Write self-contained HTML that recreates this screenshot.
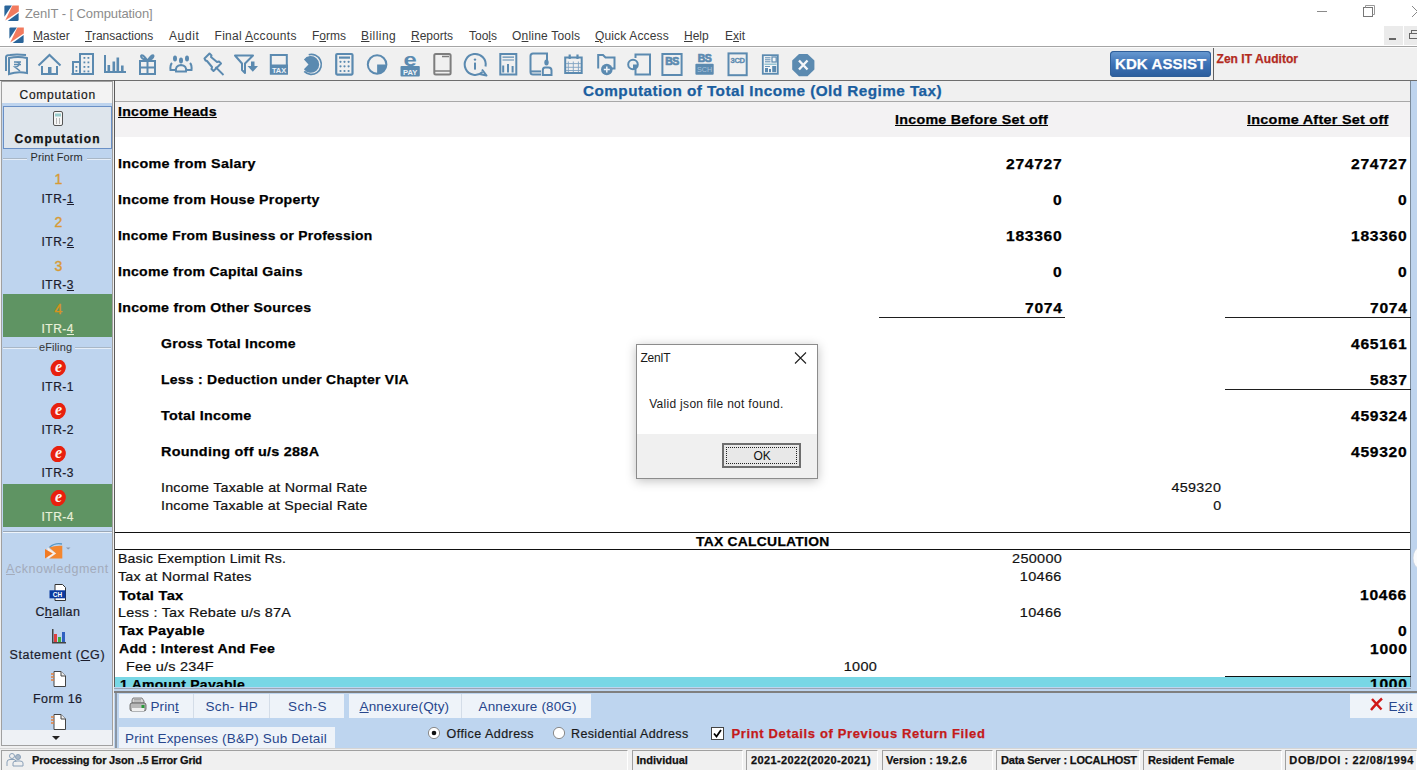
<!DOCTYPE html>
<html><head><meta charset="utf-8"><title>ZenIT</title>
<style>
html,body{margin:0;padding:0}
body{width:1417px;height:770px;overflow:hidden;position:relative;background:#fff;font-family:'Liberation Sans',sans-serif;color:#000}
.t{position:absolute;white-space:nowrap;line-height:20px}
.r{position:absolute}
u{text-decoration:underline;text-decoration-thickness:1px;text-underline-offset:1px}
.b{-webkit-text-stroke:0.25px currentColor}
.v{-webkit-text-stroke:0.2px currentColor}
</style></head><body>
<svg class="r" style="left:4px;top:5px" width="16" height="16" viewBox="0 0 16 16"><path d="M0.4 1.6 Q0.4 0.4 1.6 0.4 L7.9 0.4 L0.4 11.8 Z" fill="#2a659a"/><path d="M8.4 0.4 L14.8 0.4 L14.8 6.4 L1.2 15.6 Z" fill="#f27a5e"/><path d="M14.6 7.9 L14.6 14.7 Q14.6 15.9 13.4 15.9 L3.6 15.9 Z" fill="#2a659a"/></svg>
<div class="t" style="top:4px;font-size:13px;letter-spacing:-0.1px;color:#8c8c8c;left:25px;">ZenIT - [ Computation]</div>
<div class="r" style="left:1317px;top:11px;width:10px;height:1px;background:#8a8a8a;"></div>
<svg class="r" style="left:1363px;top:5px" width="13" height="13" viewBox="0 0 13 13"><rect x="0.5" y="2.5" width="9" height="9" fill="none" stroke="#777"/><path d="M2.5 2.5 V0.5 H11.5 V9.5 H9.5" fill="none" stroke="#999"/></svg>
<svg class="r" style="left:1408px;top:5px" width="9" height="13" viewBox="0 0 9 13"><path d="M4 1 L15 12 M15 1 L4 12" stroke="#888" stroke-width="1"/></svg>
<svg class="r" style="left:9px;top:27px" width="16" height="17" viewBox="0 0 16 17"><path d="M0.4 1.6 Q0.4 0.4 1.6 0.4 L7.9 0.4 L0.4 11.8 Z" fill="#2a659a"/><path d="M8.4 0.4 L14.8 0.4 L14.8 6.4 L1.2 15.6 Z" fill="#f27a5e"/><path d="M14.6 7.9 L14.6 14.7 Q14.6 15.9 13.4 15.9 L3.6 15.9 Z" fill="#2a659a"/></svg>
<div class="t" style="top:26px;font-size:12px;color:#3a3a3a;left:33px;"><u>M</u>aster</div>
<div class="t" style="top:26px;font-size:12px;color:#3a3a3a;left:85px;"><u>T</u>ransactions</div>
<div class="t" style="top:26px;font-size:12px;letter-spacing:0.6px;color:#3a3a3a;left:169px;">A<u>u</u>dit</div>
<div class="t" style="top:26px;font-size:12px;letter-spacing:0.3px;color:#3a3a3a;left:214.5px;">Final <u>A</u>ccounts</div>
<div class="t" style="top:26px;font-size:12px;color:#3a3a3a;left:312px;">F<u>o</u>rms</div>
<div class="t" style="top:26px;font-size:12px;letter-spacing:0.45px;color:#3a3a3a;left:361px;"><u>B</u>illing</div>
<div class="t" style="top:26px;font-size:12px;color:#3a3a3a;left:411px;"><u>R</u>eports</div>
<div class="t" style="top:26px;font-size:12px;color:#3a3a3a;left:469px;">Too<u>l</u>s</div>
<div class="t" style="top:26px;font-size:12px;letter-spacing:0.2px;color:#3a3a3a;left:512px;">O<u>n</u>line Tools</div>
<div class="t" style="top:26px;font-size:12px;letter-spacing:0.15px;color:#3a3a3a;left:595px;"><u>Q</u>uick Access</div>
<div class="t" style="top:26px;font-size:12px;color:#3a3a3a;left:684px;"><u>H</u>elp</div>
<div class="t" style="top:26px;font-size:12px;color:#3a3a3a;left:725px;">E<u>x</u>it</div>
<div class="r" style="left:1384px;top:26px;width:19px;height:19px;background:#ebebeb;"></div>
<div class="r" style="left:1389px;top:38px;width:7px;height:2px;background:#666;"></div>
<div class="r" style="left:1404px;top:26px;width:13px;height:19px;background:#ebebeb;"></div>
<svg class="r" style="left:1409px;top:30px" width="10" height="10" viewBox="0 0 10 10"><rect x="2.5" y="0.5" width="8" height="4" fill="none" stroke="#666"/><rect x="0.5" y="3.5" width="8" height="5" fill="#ebebeb" stroke="#666"/></svg>
<div class="r" style="left:0px;top:46px;width:1417px;height:1px;background:#a5a5a5;"></div>
<div class="r" style="left:0px;top:47px;width:1417px;height:33px;background:#f0f0f0;"></div>
<div class="r" style="left:0px;top:47px;width:1417px;height:1px;background:#fbfbfb;"></div>
<div class="r" style="left:0px;top:80px;width:1417px;height:1px;background:#6e6e6e;"></div>
<svg class="r" style="left:4px;top:53px" width="26" height="23" viewBox="0 0 26 23"><path d="M2 18 V4 Q2 2 6 2 Q12 1 22 2" stroke="#5b8ab0" stroke-width="2" fill="none"/><path d="M5 5 Q14 3 23 5 V20 Q14 18 5 21 Z" stroke="#5b8ab0" stroke-width="2" fill="none"/><path d="M10 9 H17 M10 11.5 H17 M12 9 Q16 9 15 12 Q14 14 11 14 L16 18" stroke="#5b8ab0" stroke-width="1.6" fill="none"/></svg>
<svg class="r" style="left:37px;top:53px" width="25" height="23" viewBox="0 0 25 23"><path d="M1.5 12.5 L12.5 2 L23.5 12.5" stroke="#5b8ab0" stroke-width="2" fill="none"/><path d="M5 13 V21 H20 V13" stroke="#5b8ab0" stroke-width="2" fill="none"/><rect x="11" y="14" width="3.5" height="7" fill="#5b8ab0"/></svg>
<svg class="r" style="left:71px;top:52px" width="23" height="24" viewBox="0 0 23 24"><path d="M2 22 V10 H8" stroke="#5b8ab0" stroke-width="2" fill="none"/><rect x="9" y="2" width="13" height="20" stroke="#5b8ab0" stroke-width="2" fill="none"/><rect x="0.5" y="21" width="22" height="2" fill="#5b8ab0"/><rect x="12.5" y="5" width="1.8" height="1.8" fill="#5b8ab0"/><rect x="12.5" y="9.5" width="1.8" height="1.8" fill="#5b8ab0"/><rect x="12.5" y="14" width="1.8" height="1.8" fill="#5b8ab0"/><rect x="12.5" y="18.5" width="1.8" height="1.8" fill="#5b8ab0"/><rect x="16.5" y="5" width="1.8" height="1.8" fill="#5b8ab0"/><rect x="16.5" y="9.5" width="1.8" height="1.8" fill="#5b8ab0"/><rect x="16.5" y="14" width="1.8" height="1.8" fill="#5b8ab0"/><rect x="16.5" y="18.5" width="1.8" height="1.8" fill="#5b8ab0"/><rect x="4.5" y="14" width="1.8" height="1.8" fill="#5b8ab0"/><rect x="4.5" y="18" width="1.8" height="1.8" fill="#5b8ab0"/></svg>
<svg class="r" style="left:103px;top:54px" width="24" height="21" viewBox="0 0 24 21"><path d="M2 1 V18 H23" stroke="#5b8ab0" stroke-width="2" fill="none"/><rect x="4.5" y="11" width="2.6" height="7" fill="#5b8ab0"/><rect x="9.5" y="7.5" width="2.6" height="10.5" fill="#5b8ab0"/><rect x="13.5" y="3.5" width="2.6" height="14.5" fill="#5b8ab0"/><rect x="18" y="11.5" width="2.6" height="6.5" fill="#5b8ab0"/></svg>
<svg class="r" style="left:138px;top:53px" width="20" height="23" viewBox="0 0 20 23"><rect x="2" y="8" width="15" height="13" stroke="#5b8ab0" stroke-width="2" fill="none"/><path d="M2 14.5 H17 M9.5 8 V21" stroke="#5b8ab0" stroke-width="2" fill="none"/><path d="M9.5 7.5 Q4 0 3 3 Q3 6 9.5 7.5 Q15 6 15.5 3 Q15 0 9.5 7.5" stroke="#5b8ab0" stroke-width="2" fill="none"/></svg>
<svg class="r" style="left:168px;top:53px" width="26" height="21" viewBox="0 0 26 21"><ellipse cx="7" cy="5.5" rx="2" ry="3" fill="#5b8ab0"/><ellipse cx="13" cy="7.5" rx="2" ry="3" fill="#5b8ab0"/><ellipse cx="19" cy="5.5" rx="2" ry="3" fill="#5b8ab0"/><path d="M4 10 Q2 12 2.5 17 H8 M22 10 Q24 12 23.5 17 H18 M8 18.5 Q7 12.5 13 12 Q19 12.5 18 18.5 Z" stroke="#5b8ab0" stroke-width="2" fill="none"/></svg>
<svg class="r" style="left:200px;top:51px" width="26" height="26" viewBox="200 51 26 26"><path d="M204.5 58.5 L209.5 53.5 L211.5 55.5 L211 57 L217 62 L219 61.5 L221 63.5 L213.5 71 L211.5 69 L212 67 L207 61 L205.5 60.5 Z" stroke="#5b8ab0" stroke-width="2" fill="none" stroke-linejoin="round"/><path d="M215.5 67 L223.5 75" stroke="#5b8ab0" stroke-width="1.8"/></svg>
<svg class="r" style="left:232px;top:52px" width="28" height="24" viewBox="232 52 28 24"><path d="M235 55.5 H253 L245 63.5 V73 L242 70 V63.5 Z" stroke="#5b8ab0" stroke-width="2" fill="none" stroke-linejoin="round"/><path d="M251 61.5 H254.5 V66 H258 L252.8 71.8 L247.5 66 H251 Z" fill="#5b8ab0"/></svg>
<svg class="r" style="left:268px;top:52px" width="22" height="25" viewBox="268 52 22 25"><rect x="270.8" y="55" width="16" height="18.5" stroke="#5b8ab0" stroke-width="2" fill="none"/><rect x="270" y="64.5" width="18" height="10" fill="#5b8ab0"/><text x="279" y="72.6" font-family="Liberation Sans" font-weight="bold" font-size="7.4" fill="#eef3f8" text-anchor="middle">TAX</text></svg>
<svg class="r" style="left:299px;top:52px" width="26" height="25" viewBox="299 52 26 25"><path d="M308.71 54.74 A10.0 10.0 0 1 1 304.23 71.47" stroke="#5b8ab0" stroke-width="1.7" fill="none"/><path d="M303.92 59.58 A8.4 8.4 0 1 1 303.92 69.22 L308.5 64.4 Z" fill="#5b8ab0"/></svg>
<svg class="r" style="left:333px;top:51px" width="23" height="27" viewBox="333 51 23 27"><rect x="336.2" y="54" width="16.3" height="20.6" rx="1" stroke="#5b8ab0" stroke-width="2.2" fill="none"/><rect x="339" y="56.5" width="11" height="2.2" fill="#5b8ab0"/><circle cx="340.5" cy="61.8" r="1.1" fill="#5b8ab0"/><circle cx="340.5" cy="66.3" r="1.1" fill="#5b8ab0"/><circle cx="340.5" cy="71" r="1.1" fill="#5b8ab0"/><circle cx="344.5" cy="61.8" r="1.1" fill="#5b8ab0"/><circle cx="344.5" cy="66.3" r="1.1" fill="#5b8ab0"/><circle cx="344.5" cy="71" r="1.1" fill="#5b8ab0"/><circle cx="348.6" cy="61.8" r="1.1" fill="#5b8ab0"/><circle cx="348.6" cy="66.3" r="1.1" fill="#5b8ab0"/><circle cx="348.6" cy="71" r="1.1" fill="#5b8ab0"/></svg>
<svg class="r" style="left:365px;top:52px" width="25" height="25" viewBox="365 52 25 25"><circle cx="377.1" cy="64.5" r="9.3" stroke="#5b8ab0" stroke-width="2" fill="none"/><path d="M377.1 64.5 H386.4 A9.3 9.3 0 0 1 377.1 73.8 Z" fill="#5b8ab0"/></svg>
<svg class="r" style="left:399px;top:50px" width="22" height="28" viewBox="399 50 22 28"><text transform="translate(410.2 65.8) scale(1.25 1)" font-family="Liberation Sans" font-weight="bold" font-size="19" fill="#5b8ab0" text-anchor="middle">e</text><rect x="400.5" y="66" width="19.3" height="10.4" rx="1" fill="#5b8ab0"/><text x="410.2" y="74.6" font-family="Liberation Sans" font-weight="bold" font-size="7.6" fill="#eef3f8" text-anchor="middle">PAY</text></svg>
<svg class="r" style="left:431px;top:51px" width="23" height="27" viewBox="431 51 23 27"><rect x="434.3" y="54" width="16.3" height="20.5" rx="1.5" stroke="#7d7d7d" stroke-width="2" fill="none"/><path d="M434.3 71 H450.6 M442 56.5 H449" stroke="#7d7d7d" stroke-width="1.6"/></svg>
<svg class="r" style="left:461px;top:50px" width="28" height="28" viewBox="461 50 28 28"><path d="M482.5 72 A10.5 10.5 0 1 1 485.5 66.5" stroke="#5b8ab0" stroke-width="2" fill="none"/><path d="M482 69.5 L486.5 75.5 L479.5 74" stroke="#5b8ab0" stroke-width="2" fill="none" stroke-linejoin="round"/><circle cx="475" cy="59.6" r="1.2" fill="#5b8ab0"/><rect x="474" y="62.6" width="2" height="7" fill="#5b8ab0"/></svg>
<svg class="r" style="left:497px;top:51px" width="23" height="27" viewBox="497 51 23 27"><rect x="500.3" y="54" width="16" height="20.5" stroke="#5b8ab0" stroke-width="2" fill="none"/><path d="M502.5 57.2 H514 M502.5 60 H514" stroke="#5b8ab0" stroke-width="1.2"/><rect x="502.2" y="65.5" width="2" height="7" fill="#5b8ab0"/><rect x="507" y="64" width="2" height="8.5" fill="#5b8ab0"/><rect x="511.6" y="66" width="2" height="6.5" fill="#5b8ab0"/></svg>
<svg class="r" style="left:527px;top:50px" width="28" height="28" viewBox="527 50 28 28"><path d="M541 74.5 H533 Q530.5 74.5 530.5 72 V56 Q530.5 53.5 533 53.5 H547 V61" stroke="#5b8ab0" stroke-width="2" fill="none"/><path d="M530.8 71.4 H541" stroke="#5b8ab0" stroke-width="2" fill="none"/><ellipse cx="546.5" cy="62.6" rx="2.2" ry="3" fill="#5b8ab0"/><path d="M542.8 75 V70.5 Q542.8 67.6 545 67.6 H548.5 Q551.5 67.6 551.5 70.5 V75 Z" stroke="#5b8ab0" stroke-width="2" fill="none"/></svg>
<svg class="r" style="left:562px;top:52px" width="23" height="24" viewBox="562 52 23 24"><rect x="565.2" y="57.5" width="16.5" height="15.5" stroke="#5b8ab0" stroke-width="2" fill="none"/><path d="M569.7 54.5 V59 M577.5 54.5 V59" stroke="#5b8ab0" stroke-width="2.2"/><path d="M568.3 61.5 V72 M573.3 61.5 V72 M578.4 61.5 V72 M566 63.6 H581 M566 67.3 H581 M566 70.5 H581" stroke="#7fa3c2" stroke-width="0.9"/></svg>
<svg class="r" style="left:595px;top:52px" width="23" height="26" viewBox="595 52 23 26"><path d="M598.2 68.5 V55 H603 L605.5 57.5 H614.5 V68.5 H609" stroke="#5b8ab0" stroke-width="2" fill="none"/><circle cx="606.8" cy="69.5" r="5.8" fill="#5b8ab0"/><path d="M606.8 66.5 V72.5 M603.8 69.5 H609.8" stroke="#eef3f8" stroke-width="1.5"/></svg>
<svg class="r" style="left:626px;top:51px" width="27" height="27" viewBox="626 51 27 27"><path d="M635.5 58 V54.5 H650 V74.5 H635.5 V69" stroke="#5b8ab0" stroke-width="2" fill="none"/><circle cx="633" cy="64.5" r="4.8" stroke="#5b8ab0" stroke-width="2" fill="none"/><path d="M633 64.5 H637.8 A4.8 4.8 0 0 1 633 69.3 Z" fill="#5b8ab0"/></svg>
<svg class="r" style="left:659px;top:51px" width="26" height="27" viewBox="659 51 26 27"><rect x="662.4" y="54" width="19.2" height="21" stroke="#5b8ab0" stroke-width="2" fill="none"/><text x="672" y="64.6" font-family="Liberation Sans" font-weight="bold" font-size="10.5" fill="#5b8ab0" stroke="#5b8ab0" stroke-width="0.7" text-anchor="middle" letter-spacing="-0.6">BS</text></svg>
<svg class="r" style="left:693px;top:51px" width="23" height="26" viewBox="693 51 23 26"><text x="704.5" y="62" font-family="Liberation Sans" font-weight="bold" font-size="10.5" fill="#5b8ab0" stroke="#5b8ab0" stroke-width="0.7" text-anchor="middle" letter-spacing="-0.6">BS</text><rect x="695.4" y="63.8" width="18.3" height="10.9" rx="1" fill="#5b8ab0"/><text x="704.5" y="72.4" font-family="Liberation Sans" font-size="7.2" fill="#a9c3da" text-anchor="middle">SCH</text></svg>
<svg class="r" style="left:725px;top:50px" width="25" height="28" viewBox="725 50 25 28"><rect x="728.5" y="53.4" width="18.2" height="21.8" stroke="#5b8ab0" stroke-width="2" fill="none"/><text x="737.6" y="63.3" font-family="Liberation Sans" font-weight="bold" font-size="7.6" fill="#5b8ab0" stroke="#5b8ab0" stroke-width="0.3" text-anchor="middle" letter-spacing="-0.4">3CD</text></svg>
<svg class="r" style="left:760px;top:52px" width="21" height="25" viewBox="760 52 21 25"><rect x="762.8" y="55.2" width="15" height="18.6" stroke="#5b8ab0" stroke-width="1.8" fill="#f4f6f8"/><path d="M765 57.8 H770.5 M765 59.8 H770.5 M765 61.8 H770.5" stroke="#5b8ab0" stroke-width="1"/><rect x="772" y="57" width="4.2" height="5" fill="none" stroke="#5b8ab0" stroke-width="1.2"/><path d="M764.5 64.2 H776.5" stroke="#7fb8c8" stroke-width="1.2"/><path d="M765 66.5 H770" stroke="#5b8ab0" stroke-width="0.9"/><rect x="765" y="68" width="3" height="4.2" fill="#5b8ab0"/><rect x="769" y="69" width="2" height="3.2" fill="#5b8ab0"/><rect x="772.2" y="66" width="4" height="6.2" fill="#5b8ab0"/></svg>
<svg class="r" style="left:790px;top:52px" width="27" height="26" viewBox="790 52 27 26"><path d="M799 53.9 H807.5 L814.4 60.5 V69.5 L807.5 76.2 H799 L792.2 69.5 V60.5 Z" fill="#5b8ab0"/><path d="M799 60.5 L807.5 69.5 M807.5 60.5 L799 69.5" stroke="#f4f6f9" stroke-width="2.4"/></svg>
<div class="r" style="left:1110px;top:51px;width:101px;height:26px;border-radius:4px;background:linear-gradient(#6a9bd2,#3d72b6 50%,#2b5d9c);box-shadow:inset 0 0 0 1px #2f5e98"></div>
<div class="t b" style="top:53.5px;font-size:15px;font-weight:bold;letter-spacing:0.1px;color:#fff;left:1115px;">KDK ASSIST</div>
<div class="r" style="left:1213px;top:48px;width:1px;height:32px;background:#606060;"></div>
<div class="t b" style="top:48.5px;font-size:12px;font-weight:bold;letter-spacing:0.05px;color:#b22a1e;left:1216.5px;">Zen IT Auditor</div>
<div class="r" style="left:0px;top:81px;width:114px;height:667px;background:#f0f0f0;"></div>
<div class="r" style="left:1px;top:81px;width:112px;height:665px;border:1px solid #a0a0a0;box-sizing:border-box"></div>
<div class="r" style="left:2px;top:82px;width:110px;height:21px;background:#f3f3f3;"></div>
<div class="t v" style="top:84.5px;font-size:12px;letter-spacing:0.76px;color:#1a1a1a;left:19.5px;">Computation</div>
<div class="r" style="left:2px;top:103px;width:110px;height:627px;background:#bed4ee;"></div>
<div class="r" style="left:3px;top:106px;width:109px;height:43px;background:#dee5ec;border:1px solid #6a90c6;box-sizing:border-box"></div>
<svg class="r" style="left:52px;top:111px" width="12" height="15" viewBox="0 0 12 15"><rect x="1.5" y="0.5" width="9" height="14" rx="1.5" fill="#f6f6f6" stroke="#555"/><rect x="3" y="2.5" width="6" height="3" fill="#9cc"/><path d="M4 8h1M7 8h1M4 10h1M7 10h1M4 12h1M7 12h1" stroke="#777"/></svg>
<div class="t b" style="top:128.5px;font-size:12px;font-weight:bold;letter-spacing:1.1px;color:#111;left:14.5px;">Computation</div>
<div class="r" style="left:3px;top:158px;width:24px;height:1px;background:#a9b7c6;"></div>
<div class="r" style="left:3px;top:159px;width:24px;height:1px;background:#e6eef8;"></div>
<div class="r" style="left:87px;top:158px;width:24px;height:1px;background:#a9b7c6;"></div>
<div class="r" style="left:87px;top:159px;width:24px;height:1px;background:#e6eef8;"></div>
<div class="t" style="top:146.5px;font-size:11px;letter-spacing:0.1px;color:#2a2a2a;left:30.5px;transform:scaleX(1.0);transform-origin:left center;">Print Form</div>
<div class="t" style="top:169px;font-size:14px;color:#d89a34;left:54.5px;-webkit-text-stroke:0.4px currentColor">1</div>
<div class="t v" style="top:188.5px;font-size:12px;letter-spacing:0.5px;color:#1c1c2c;left:41.5px;">ITR-<u>1</u></div>
<div class="t" style="top:212px;font-size:14px;color:#d89a34;left:54.5px;-webkit-text-stroke:0.4px currentColor">2</div>
<div class="t v" style="top:232px;font-size:12px;letter-spacing:0.5px;color:#1c1c2c;left:41.5px;">ITR-<u>2</u></div>
<div class="t" style="top:256px;font-size:14px;color:#d89a34;left:54.5px;-webkit-text-stroke:0.4px currentColor">3</div>
<div class="t v" style="top:274.5px;font-size:12px;letter-spacing:0.5px;color:#1c1c2c;left:41.5px;">ITR-<u>3</u></div>
<div class="r" style="left:3px;top:294px;width:109px;height:43px;background:#5f9463;"></div>
<div class="t" style="top:299px;font-size:14px;color:#d8921e;left:54.5px;-webkit-text-stroke:0.4px currentColor">4</div>
<div class="t v" style="top:318.5px;font-size:12px;letter-spacing:0.5px;color:#e8f0d8;left:41.5px;">ITR-<u>4</u></div>
<div class="r" style="left:3px;top:347px;width:34px;height:1px;background:#a9b7c6;"></div>
<div class="r" style="left:3px;top:348px;width:34px;height:1px;background:#e6eef8;"></div>
<div class="r" style="left:75px;top:347px;width:36px;height:1px;background:#a9b7c6;"></div>
<div class="r" style="left:75px;top:348px;width:36px;height:1px;background:#e6eef8;"></div>
<div class="t" style="top:336.5px;font-size:11px;letter-spacing:0.1px;color:#333;left:39px;">eFiling</div>
<svg class="r" style="left:50px;top:360px" width="16" height="16" viewBox="0 0 16 16"><ellipse cx="8.2" cy="8" rx="7.4" ry="8.4" transform="rotate(28 8.2 8)" fill="#e8200e"/><text x="8.6" y="12.4" font-family="Liberation Serif" font-style="italic" font-weight="bold" font-size="16" fill="#fff5ee" text-anchor="middle">e</text></svg>
<div class="t v" style="top:377px;font-size:12px;letter-spacing:0.5px;color:#1c1c2c;left:41.5px;">ITR-1</div>
<svg class="r" style="left:50px;top:403px" width="16" height="16" viewBox="0 0 16 16"><ellipse cx="8.2" cy="8" rx="7.4" ry="8.4" transform="rotate(28 8.2 8)" fill="#e8200e"/><text x="8.6" y="12.4" font-family="Liberation Serif" font-style="italic" font-weight="bold" font-size="16" fill="#fff5ee" text-anchor="middle">e</text></svg>
<div class="t v" style="top:420px;font-size:12px;letter-spacing:0.5px;color:#1c1c2c;left:41.5px;">ITR-2</div>
<svg class="r" style="left:50px;top:446px" width="16" height="16" viewBox="0 0 16 16"><ellipse cx="8.2" cy="8" rx="7.4" ry="8.4" transform="rotate(28 8.2 8)" fill="#e8200e"/><text x="8.6" y="12.4" font-family="Liberation Serif" font-style="italic" font-weight="bold" font-size="16" fill="#fff5ee" text-anchor="middle">e</text></svg>
<div class="t v" style="top:463px;font-size:12px;letter-spacing:0.5px;color:#1c1c2c;left:41.5px;">ITR-3</div>
<div class="r" style="left:3px;top:484px;width:109px;height:43px;background:#5f9463;"></div>
<svg class="r" style="left:50px;top:490px" width="16" height="16" viewBox="0 0 16 16"><ellipse cx="8.2" cy="8" rx="7.4" ry="8.4" transform="rotate(28 8.2 8)" fill="#e8200e"/><text x="8.6" y="12.4" font-family="Liberation Serif" font-style="italic" font-weight="bold" font-size="16" fill="#fff5ee" text-anchor="middle">e</text></svg>
<div class="t v" style="top:507px;font-size:12px;letter-spacing:0.5px;color:#e8f0d8;left:41.5px;">ITR-4</div>
<div class="r" style="left:3px;top:531px;width:109px;height:1px;background:#9aa8b8;"></div>
<div class="r" style="left:3px;top:532px;width:109px;height:1px;background:#eef4fb;"></div>
<svg class="r" style="left:45px;top:542px" width="27" height="18" viewBox="0 0 27 18"><path d="M2.5 5.6 L11.2 11.6 L2.5 17 Z" fill="#fbeee6"/><path d="M0 7 L7.8 11.6 L0 16.4 Z" fill="#f27a22"/><path d="M4.2 5.6 Q10 3.2 17.3 3.8 V16.6 H4.2 L11.2 11.6 Z" fill="#f4862e"/><path d="M4.5 5.2 Q10 0.6 17 2" stroke="#5a98c4" stroke-width="1.3" fill="none"/><path d="M21 5.6 L25.5 5.6 L23.2 7.6Z" fill="#8a9ab0"/></svg>
<div class="t" style="top:559px;font-size:12.5px;letter-spacing:0.55px;color:#a3abbb;left:6px;"><u>A</u>cknowledgment</div>
<svg class="r" style="left:49px;top:584px" width="18" height="17" viewBox="0 0 18 17"><path d="M6 0.5 H13.5 L16.5 3.5 V16.5 H6 Z" fill="#fff" stroke="#333"/><rect x="0.5" y="6.3" width="16" height="8" fill="#0a3aa0"/><text x="8.5" y="12.8" font-size="6.5" font-weight="bold" fill="#fff" text-anchor="middle" font-family="Liberation Sans">CH</text></svg>
<div class="t v" style="top:601.5px;font-size:12.5px;letter-spacing:0.32px;color:#1c1c2c;left:35.5px;">C<u>h</u>allan</div>
<svg class="r" style="left:51px;top:629px" width="16" height="15" viewBox="0 0 16 15"><rect x="1" y="0" width="1.5" height="14" fill="#444"/><rect x="3" y="5" width="3" height="9" fill="#e04040"/><rect x="7" y="8" width="3" height="6" fill="#40b040"/><rect x="11" y="3" width="3" height="11" fill="#3060c0"/><rect x="1" y="13" width="14" height="1.5" fill="#444"/></svg>
<div class="t v" style="top:644.5px;font-size:12.5px;letter-spacing:0.58px;color:#1c1c2c;left:9.5px;">Statement (<u>C</u>G)</div>
<svg class="r" style="left:50px;top:671px" width="17" height="17" viewBox="0 0 17 17"><path d="M4 0.5 H11 L15.5 5 V15.5 H4 Z" fill="#fff" stroke="#444"/><path d="M11 0.5 V5 H15.5" fill="#eee" stroke="#444"/><path d="M1 3 L4 3 M1 6 L4 6 M1 9 L4 9" stroke="#e08040" stroke-width="1.5"/></svg>
<div class="t v" style="top:688.5px;font-size:12.5px;letter-spacing:0.41px;color:#1c1c2c;left:33px;">Form 16</div>
<svg class="r" style="left:50px;top:714px" width="17" height="17" viewBox="0 0 17 17"><path d="M4 0.5 H11 L15.5 5 V15.5 H4 Z" fill="#fff" stroke="#444"/><path d="M11 0.5 V5 H15.5" fill="#eee" stroke="#444"/><path d="M1 3 L4 3 M1 6 L4 6 M1 9 L4 9" stroke="#e08040" stroke-width="1.5"/></svg>
<div class="r" style="left:2px;top:730px;width:110px;height:15px;background:#eef1f5;"></div>
<svg class="r" style="left:52px;top:736px" width="8" height="5" viewBox="0 0 8 5"><path d="M0 0 H8 L4 4 Z" fill="#222"/></svg>
<div class="r" style="left:114px;top:81px;width:1303px;height:611px;background:#bed4ee;"></div>
<div class="r" style="left:114px;top:81px;width:1297px;height:607px;background:#fff;"></div>
<div class="r" style="left:114px;top:80px;width:1px;height:608px;background:#5a5a5a;"></div>
<div class="r" style="left:1410px;top:81px;width:1px;height:607px;background:#7a8a9a;"></div>
<div class="r" style="left:115px;top:81px;width:1295px;height:20px;background:#f0f0f0;"></div>
<div class="r" style="left:115px;top:101px;width:1295px;height:1px;background:#a8a8a8;"></div>
<div class="r" style="left:115px;top:102px;width:1295px;height:35px;background:#f3f2f3;"></div>
<div class="t b" style="top:80.5px;font-size:14px;font-weight:bold;letter-spacing:0.4px;color:#1b5e9f;left:582.5px;transform:scaleX(1.094);transform-origin:left center;">Computation of Total Income (Old Regime Tax)</div>
<div class="t b" style="top:102px;font-size:13.5px;font-weight:bold;letter-spacing:0.25px;left:117.5px;transform:scaleX(1.045);transform-origin:left center;"><u>Income Heads</u></div>
<div class="t b" style="top:109.5px;font-size:13.5px;font-weight:bold;letter-spacing:0.25px;left:895px;transform:scaleX(1.057);transform-origin:left center;"><u>Income Before Set off</u></div>
<div class="t b" style="top:109.5px;font-size:13.5px;font-weight:bold;letter-spacing:0.25px;left:1247px;transform:scaleX(1.066);transform-origin:left center;"><u>Income After Set off</u></div>
<div class="t b" style="top:154px;font-size:13.5px;font-weight:bold;letter-spacing:0.25px;left:117.5px;transform:scaleX(1.061);transform-origin:left center;">Income from Salary</div>
<div class="t b" style="top:154px;font-size:14px;font-weight:bold;letter-spacing:0.6px;right:354.90px;transform:scaleX(1.117);transform-origin:right center;">274727</div>
<div class="t b" style="top:154px;font-size:14px;font-weight:bold;letter-spacing:0.6px;right:9.70px;transform:scaleX(1.117);transform-origin:right center;">274727</div>
<div class="t b" style="top:190px;font-size:13.5px;font-weight:bold;letter-spacing:0.25px;left:117.5px;transform:scaleX(1.051);transform-origin:left center;">Income from House Property</div>
<div class="t b" style="top:190px;font-size:14px;font-weight:bold;letter-spacing:0.6px;right:354.90px;transform:scaleX(1.117);transform-origin:right center;">0</div>
<div class="t b" style="top:190px;font-size:14px;font-weight:bold;letter-spacing:0.6px;right:9.70px;transform:scaleX(1.117);transform-origin:right center;">0</div>
<div class="t b" style="top:226px;font-size:13.5px;font-weight:bold;letter-spacing:0.25px;left:117.5px;transform:scaleX(1.027);transform-origin:left center;">Income From Business or Profession</div>
<div class="t b" style="top:226px;font-size:14px;font-weight:bold;letter-spacing:0.6px;right:354.90px;transform:scaleX(1.117);transform-origin:right center;">183360</div>
<div class="t b" style="top:226px;font-size:14px;font-weight:bold;letter-spacing:0.6px;right:9.70px;transform:scaleX(1.117);transform-origin:right center;">183360</div>
<div class="t b" style="top:262px;font-size:13.5px;font-weight:bold;letter-spacing:0.25px;left:117.5px;transform:scaleX(1.042);transform-origin:left center;">Income from Capital Gains</div>
<div class="t b" style="top:262px;font-size:14px;font-weight:bold;letter-spacing:0.6px;right:354.90px;transform:scaleX(1.117);transform-origin:right center;">0</div>
<div class="t b" style="top:262px;font-size:14px;font-weight:bold;letter-spacing:0.6px;right:9.70px;transform:scaleX(1.117);transform-origin:right center;">0</div>
<div class="t b" style="top:298px;font-size:13.5px;font-weight:bold;letter-spacing:0.25px;left:117.5px;transform:scaleX(1.051);transform-origin:left center;">Income from Other Sources</div>
<div class="t b" style="top:298px;font-size:14px;font-weight:bold;letter-spacing:0.6px;right:354.90px;transform:scaleX(1.117);transform-origin:right center;">7074</div>
<div class="t b" style="top:298px;font-size:14px;font-weight:bold;letter-spacing:0.6px;right:9.70px;transform:scaleX(1.117);transform-origin:right center;">7074</div>
<div class="r" style="left:879px;top:317px;width:186px;height:1px;background:#1e1e1e;"></div>
<div class="r" style="left:1225px;top:317px;width:186px;height:1px;background:#1e1e1e;"></div>
<div class="t b" style="top:334px;font-size:13.5px;font-weight:bold;letter-spacing:0.25px;left:161px;transform:scaleX(1.04);transform-origin:left center;">Gross Total Income</div>
<div class="t b" style="top:334px;font-size:14px;font-weight:bold;letter-spacing:0.6px;right:9.70px;transform:scaleX(1.117);transform-origin:right center;">465161</div>
<div class="t b" style="top:370px;font-size:13.5px;font-weight:bold;letter-spacing:0.25px;left:161px;transform:scaleX(1.035);transform-origin:left center;">Less : Deduction under Chapter VIA</div>
<div class="t b" style="top:370px;font-size:14px;font-weight:bold;letter-spacing:0.6px;right:9.70px;transform:scaleX(1.117);transform-origin:right center;">5837</div>
<div class="t b" style="top:406px;font-size:13.5px;font-weight:bold;letter-spacing:0.25px;left:161px;transform:scaleX(1.062);transform-origin:left center;">Total Income</div>
<div class="t b" style="top:406px;font-size:14px;font-weight:bold;letter-spacing:0.6px;right:9.70px;transform:scaleX(1.117);transform-origin:right center;">459324</div>
<div class="t b" style="top:442px;font-size:13.5px;font-weight:bold;letter-spacing:0.25px;left:161px;transform:scaleX(1.066);transform-origin:left center;">Rounding off u/s 288A</div>
<div class="t b" style="top:442px;font-size:14px;font-weight:bold;letter-spacing:0.6px;right:9.70px;transform:scaleX(1.117);transform-origin:right center;">459320</div>
<div class="r" style="left:1225px;top:389px;width:186px;height:1px;background:#1e1e1e;"></div>
<div class="t v" style="top:478px;font-size:13px;letter-spacing:0.2px;color:#111;left:160.5px;transform:scaleX(1.1);transform-origin:left center;">Income Taxable at Normal Rate</div>
<div class="t v" style="top:496px;font-size:13px;letter-spacing:0.2px;color:#111;left:160.5px;transform:scaleX(1.096);transform-origin:left center;">Income Taxable at Special Rate</div>
<div class="t v" style="top:478px;font-size:13px;letter-spacing:0.3px;color:#111;right:195.70px;transform:scaleX(1.1);transform-origin:right center;">459320</div>
<div class="t v" style="top:496px;font-size:13px;letter-spacing:0.3px;color:#111;right:195.70px;transform:scaleX(1.1);transform-origin:right center;">0</div>
<div class="r" style="left:115px;top:532px;width:1295px;height:1px;background:#111;"></div>
<div class="r" style="left:115px;top:549px;width:1295px;height:1px;background:#111;"></div>
<div class="t b" style="top:532px;font-size:13.5px;font-weight:bold;letter-spacing:0.25px;left:695.5px;transform:scaleX(1.027);transform-origin:left center;">TAX CALCULATION</div>
<div class="t v" style="top:549px;font-size:13px;letter-spacing:0.2px;color:#111;left:117.5px;transform:scaleX(1.078);transform-origin:left center;">Basic Exemption Limit Rs.</div>
<div class="t v" style="top:549px;font-size:13px;letter-spacing:0.3px;color:#111;right:355.20px;transform:scaleX(1.11);transform-origin:right center;">250000</div>
<div class="t v" style="top:567px;font-size:13px;letter-spacing:0.2px;color:#111;left:118px;transform:scaleX(1.1);transform-origin:left center;">Tax at Normal Rates</div>
<div class="t v" style="top:567px;font-size:13px;letter-spacing:0.3px;color:#111;right:355.20px;transform:scaleX(1.11);transform-origin:right center;">10466</div>
<div class="t b" style="top:585.5px;font-size:13.5px;font-weight:bold;letter-spacing:0.25px;left:118.5px;transform:scaleX(1.083);transform-origin:left center;">Total Tax</div>
<div class="t b" style="top:585.2px;font-size:14px;font-weight:bold;letter-spacing:0.6px;right:9.70px;transform:scaleX(1.117);transform-origin:right center;">10466</div>
<div class="t v" style="top:603px;font-size:13px;letter-spacing:0.2px;color:#111;left:117.5px;transform:scaleX(1.106);transform-origin:left center;">Less : Tax Rebate u/s 87A</div>
<div class="t v" style="top:603px;font-size:13px;letter-spacing:0.3px;color:#111;right:355.20px;transform:scaleX(1.11);transform-origin:right center;">10466</div>
<div class="t b" style="top:621.3px;font-size:13.5px;font-weight:bold;letter-spacing:0.25px;left:118.5px;transform:scaleX(1.075);transform-origin:left center;">Tax Payable</div>
<div class="t b" style="top:621.0px;font-size:14px;font-weight:bold;letter-spacing:0.6px;right:9.70px;transform:scaleX(1.117);transform-origin:right center;">0</div>
<div class="t b" style="top:639.3px;font-size:13.5px;font-weight:bold;letter-spacing:0.25px;left:118.5px;transform:scaleX(1.047);transform-origin:left center;">Add : Interest And Fee</div>
<div class="t b" style="top:639.0px;font-size:14px;font-weight:bold;letter-spacing:0.6px;right:9.70px;transform:scaleX(1.117);transform-origin:right center;">1000</div>
<div class="t v" style="top:657px;font-size:13px;letter-spacing:0.2px;color:#111;left:126px;transform:scaleX(1.112);transform-origin:left center;">Fee u/s 234F</div>
<div class="t v" style="top:657px;font-size:13px;letter-spacing:0.3px;color:#111;right:540.20px;transform:scaleX(1.11);transform-origin:right center;">1000</div>
<div class="r" style="left:1225px;top:676px;width:186px;height:1px;background:#111;"></div>
<div class="r" style="left:115px;top:677px;width:1295px;height:10px;background:#78d7e5;"></div>
<div class="r" style="left:115px;top:677px;width:1295px;height:10px;overflow:hidden">
<div class="t b" style="top:-2px;font-size:13.5px;font-weight:bold;letter-spacing:0.25px;left:5px;transform:scaleX(1.037);transform-origin:left center;">1 Amount Payable</div>
<div class="t b" style="top:-3px;font-size:14px;font-weight:bold;letter-spacing:0.6px;right:2.70px;transform:scaleX(1.117);transform-origin:right center;">1000</div>
</div>
<div class="r" style="left:114px;top:687px;width:1303px;height:5px;background:#bed4ee;"></div>
<div class="r" style="left:114px;top:688px;width:1297px;height:1px;background:#9aa6b4;"></div>
<div class="r" style="left:114px;top:691px;width:1303px;height:2px;background:#7f7f7f;"></div>
<div class="r" style="left:114px;top:693px;width:1303px;height:55px;background:#bed5ef;"></div>
<div class="r" style="left:115px;top:693px;width:2px;height:55px;background:#8a96a4;"></div>
<div class="r" style="left:119px;top:694px;width:74px;height:24px;background:#eef3f9;"></div>
<div class="r" style="left:194px;top:694px;width:75px;height:24px;background:#eef3f9;"></div>
<div class="r" style="left:270px;top:694px;width:74px;height:24px;background:#eef3f9;"></div>
<div class="r" style="left:349px;top:694px;width:112px;height:24px;background:#eef3f9;"></div>
<div class="r" style="left:462px;top:694px;width:129px;height:24px;background:#eef3f9;"></div>
<div class="r" style="left:193px;top:694px;width:1px;height:24px;background:#d4dde8;"></div>
<div class="r" style="left:269px;top:694px;width:1px;height:24px;background:#d4dde8;"></div>
<div class="r" style="left:461px;top:694px;width:1px;height:24px;background:#d4dde8;"></div>
<svg class="r" style="left:129px;top:697px" width="18" height="16" viewBox="0 0 18 16"><path d="M4 1 H13 L15 4 V6 H3 V3 Z" fill="#d8d8d8" stroke="#666" stroke-width="0.8"/><path d="M5 2.5 H12 M5 4 H12" stroke="#888" stroke-width="0.6"/><rect x="1" y="6" width="16" height="8" rx="2" fill="#b8b8b8" stroke="#555" stroke-width="0.8"/><rect x="3" y="11" width="12" height="3" fill="#f0f0f0"/><rect x="12.5" y="8" width="3" height="3" fill="#2a9a3a"/></svg>
<div class="t" style="top:696.5px;font-size:13.5px;letter-spacing:0.1px;color:#27468c;left:150.5px;">Prin<u>t</u></div>
<div class="t" style="top:696.5px;font-size:13.5px;letter-spacing:0.35px;color:#27468c;left:205.5px;">Sch- HP</div>
<div class="t" style="top:696.5px;font-size:13.5px;letter-spacing:0.45px;color:#27468c;left:288px;">Sch-S</div>
<div class="t" style="top:697px;font-size:13.5px;letter-spacing:0.15px;color:#27468c;left:359.5px;"><u>A</u>nnexure(Qty)</div>
<div class="t" style="top:697px;font-size:13.5px;letter-spacing:0.15px;color:#27468c;left:478.5px;">Annexure (80G)</div>
<div class="r" style="left:119px;top:727px;width:216px;height:21px;background:#eef3f9;"></div>
<div class="t" style="top:729px;font-size:13.5px;letter-spacing:0.17px;color:#27468c;left:125px;">Print Expenses (B&amp;P) Sub Detail</div>
<div class="r" style="left:1350px;top:694px;width:67px;height:24px;background:#eef3f9;"></div>
<svg class="r" style="left:1369px;top:697px" width="15" height="15" viewBox="0 0 15 15"><path d="M2 13 Q6 8 13 1.5" stroke="#d01818" stroke-width="2.4" fill="none"/><path d="M3 2 L12.5 12.5" stroke="#d01818" stroke-width="2.4"/></svg>
<div class="t" style="top:697px;font-size:13.5px;letter-spacing:0.5px;color:#27468c;left:1388.5px;">E<u>x</u>it</div>
<svg class="r" style="left:427px;top:726px" width="14" height="14" viewBox="0 0 14 14"><circle cx="7" cy="7" r="5.6" fill="#fff" stroke="#8a8a8a"/><circle cx="7" cy="7" r="2.3" fill="#111"/></svg>
<div class="t v" style="top:723.5px;font-size:12.5px;letter-spacing:0.46px;color:#1a1a1a;left:446.5px;">Office Address</div>
<svg class="r" style="left:552px;top:726px" width="14" height="14" viewBox="0 0 14 14"><circle cx="7" cy="7" r="5.6" fill="#fff" stroke="#8a8a8a"/></svg>
<div class="t v" style="top:723.5px;font-size:12.5px;letter-spacing:0.37px;color:#1a1a1a;left:571px;">Residential Address</div>
<svg class="r" style="left:711px;top:727px" width="14" height="14" viewBox="0 0 14 14"><rect x="0.5" y="0.5" width="12" height="12" fill="#fff" stroke="#444"/><path d="M3 6.5 L5.5 9.5 L10 3" stroke="#000" stroke-width="1.8" fill="none"/></svg>
<div class="t b" style="top:723.5px;font-size:13px;font-weight:bold;letter-spacing:0.64px;color:#c41a1a;left:731.5px;">Print Details of Previous Return Filed</div>
<div class="r" style="left:0px;top:748px;width:1417px;height:22px;background:#f0f0f0;"></div>
<div class="r" style="left:0px;top:748px;width:1417px;height:1px;background:#d6d6d6;"></div>
<div class="r" style="left:1px;top:750px;width:627px;height:20px;border-top:1px solid #a0a0a0;border-left:1px solid #a0a0a0;border-right:1px solid #fff;box-sizing:border-box"></div>
<div class="r" style="left:632px;top:750px;width:111px;height:20px;border-top:1px solid #a0a0a0;border-left:1px solid #a0a0a0;border-right:1px solid #fff;box-sizing:border-box"></div>
<div class="r" style="left:746px;top:750px;width:132px;height:20px;border-top:1px solid #a0a0a0;border-left:1px solid #a0a0a0;border-right:1px solid #fff;box-sizing:border-box"></div>
<div class="r" style="left:882px;top:750px;width:111px;height:20px;border-top:1px solid #a0a0a0;border-left:1px solid #a0a0a0;border-right:1px solid #fff;box-sizing:border-box"></div>
<div class="r" style="left:996px;top:750px;width:144px;height:20px;border-top:1px solid #a0a0a0;border-left:1px solid #a0a0a0;border-right:1px solid #fff;box-sizing:border-box"></div>
<div class="r" style="left:1143px;top:750px;width:139px;height:20px;border-top:1px solid #a0a0a0;border-left:1px solid #a0a0a0;border-right:1px solid #fff;box-sizing:border-box"></div>
<div class="r" style="left:1285px;top:750px;width:132px;height:20px;border-top:1px solid #a0a0a0;border-left:1px solid #a0a0a0;border-right:1px solid #fff;box-sizing:border-box"></div>
<svg class="r" style="left:6px;top:752px" width="18" height="15" viewBox="0 0 18 15"><circle cx="6" cy="4" r="2.5" fill="none" stroke="#8aa0b8"/><circle cx="12" cy="5" r="2.5" fill="#aab8c8" stroke="#8aa0b8"/><path d="M1 14 V10 Q1 7.5 4 7.5 H8 Q10 7.5 10 10 M7 14 V11 Q7 9 10 9 H14 Q17 9 17 11 V14 Z" fill="none" stroke="#8aa0b8"/></svg>
<div class="t b" style="top:750px;font-size:11px;font-weight:bold;letter-spacing:-0.2px;color:#111;left:32px;">Processing for Json ..5 Error Grid</div>
<div class="t b" style="top:750px;font-size:11px;font-weight:bold;color:#111;left:636.5px;">Individual</div>
<div class="t b" style="top:750px;font-size:11px;font-weight:bold;letter-spacing:0.37px;color:#111;left:751px;">2021-2022(2020-2021)</div>
<div class="t b" style="top:750px;font-size:11px;font-weight:bold;letter-spacing:0.05px;color:#111;left:886px;">Version : 19.2.6</div>
<div class="t b" style="top:750px;font-size:11px;font-weight:bold;letter-spacing:-0.15px;color:#111;left:1001px;">Data Server : LOCALHOST</div>
<div class="t b" style="top:750px;font-size:11px;font-weight:bold;letter-spacing:-0.07px;color:#111;left:1148px;">Resident Female</div>
<div class="t b" style="top:750px;font-size:11px;font-weight:bold;letter-spacing:0.64px;color:#111;left:1289.3px;">DOB/DOI : 22/08/1994</div>
<div class="r" style="left:631px;top:339px;width:192px;height:146px;box-shadow:0 2px 10px rgba(0,0,0,0.25);left:636px;top:344px;width:182px;height:135px"></div>
<div class="r" style="left:636px;top:344px;width:182px;height:135px;background:#fff;border:1px solid #8c8c8c;box-sizing:border-box"></div>
<div class="r" style="left:637px;top:434px;width:180px;height:44px;background:#f0f0f0;"></div>
<div class="t" style="top:348px;font-size:12px;letter-spacing:-0.3px;color:#1a1a1a;left:640.5px;">ZenIT</div>
<svg class="r" style="left:794px;top:352px" width="13" height="12" viewBox="0 0 13 12"><path d="M1 0.5 L12 11.5 M12 0.5 L1 11.5" stroke="#222" stroke-width="1.1"/></svg>
<div class="t" style="top:394px;font-size:12px;letter-spacing:0.3px;color:#1a1a1a;left:649.2px;">Valid json file not found.</div>
<div class="r" style="left:722px;top:443px;width:79px;height:25px;background:#e8e8e8;border:2px solid #6e6e6e;box-sizing:border-box"></div>
<div class="r" style="left:726px;top:447px;width:71px;height:17px;border:1px dotted #222;box-sizing:border-box"></div>
<div class="t" style="top:445.5px;font-size:12px;color:#111;left:753.5px;">OK</div>
<svg class="r" style="left:1411px;top:546px" width="6" height="24" viewBox="0 0 6 24"><ellipse cx="8" cy="12" rx="6" ry="10" fill="#fafbfc" stroke="#c8d2de" stroke-width="0.8"/></svg>
</body></html>
